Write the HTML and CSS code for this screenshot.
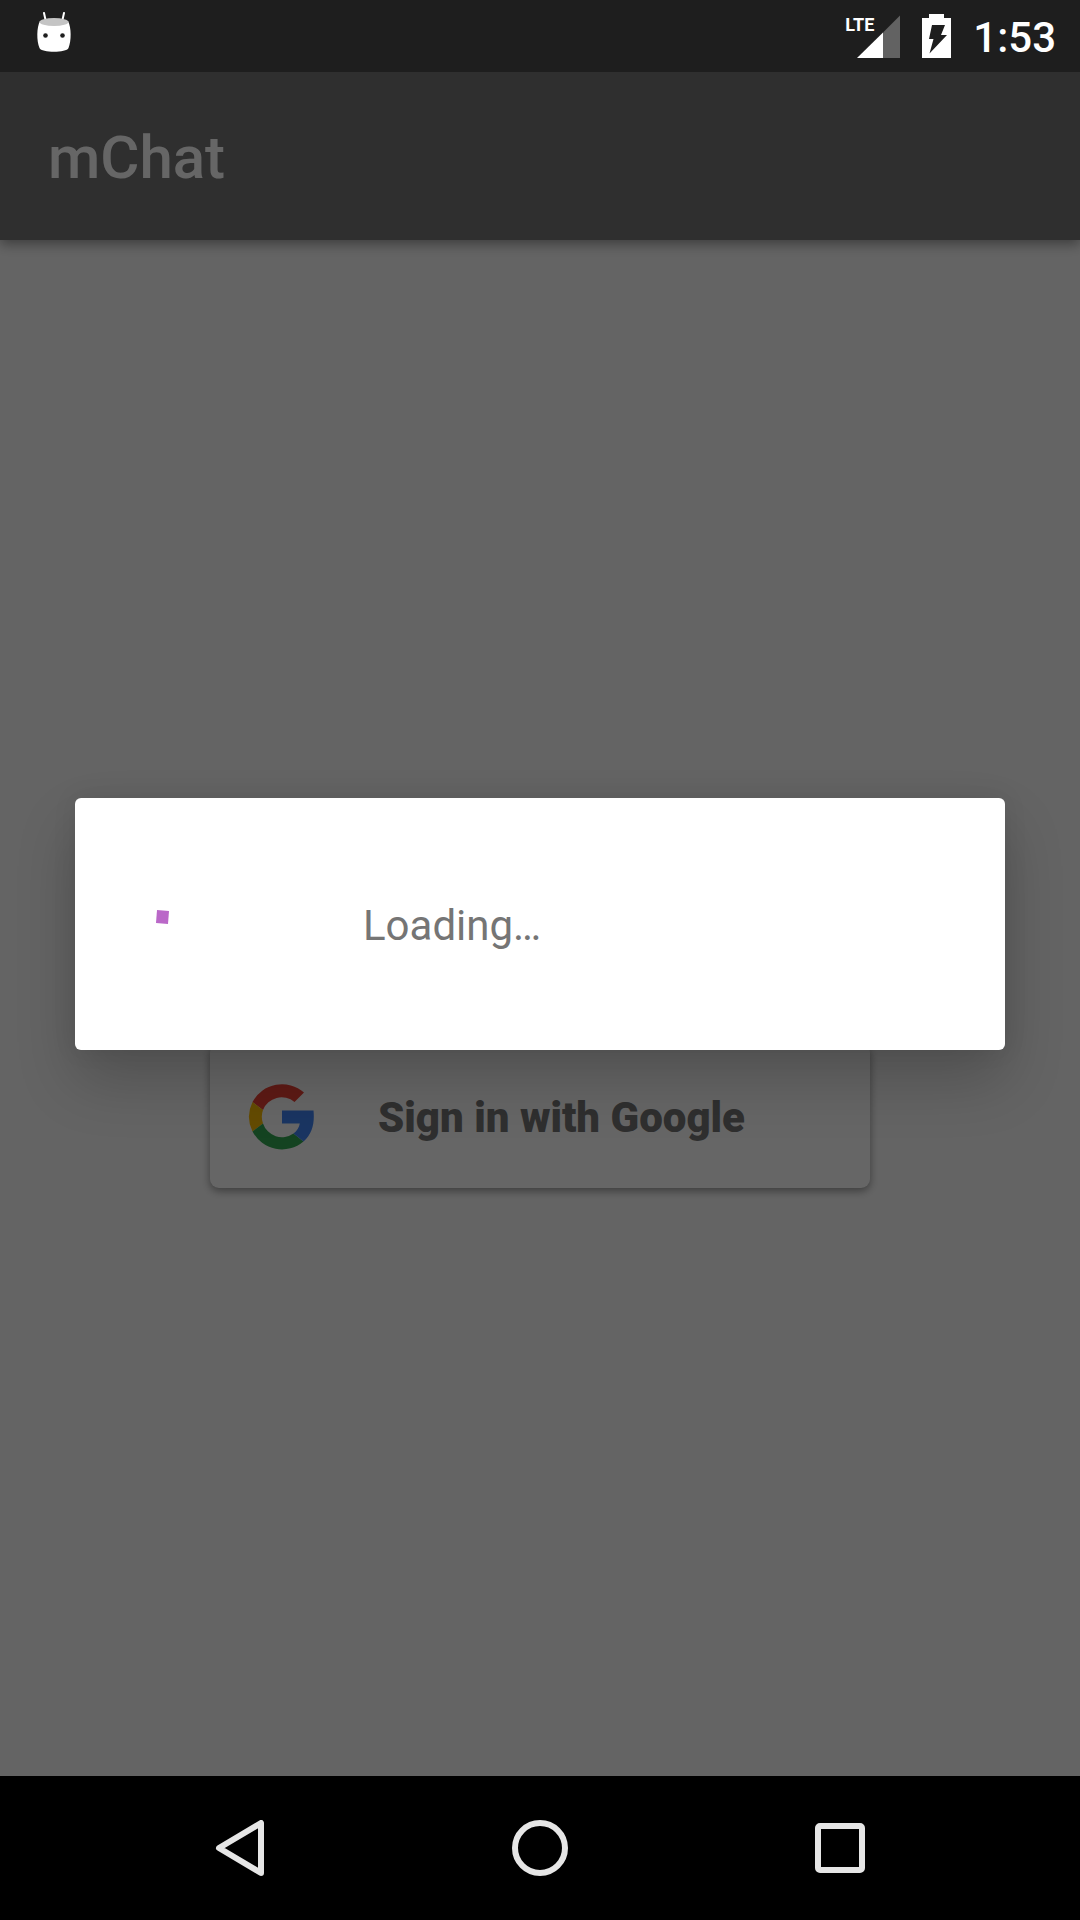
FILE: index.html
```html
<!DOCTYPE html>
<html lang="en">
<head>
<meta charset="utf-8">
<meta name="viewport" content="width=device-width, initial-scale=1">
<title>mChat</title>
<link rel="stylesheet" href="styles.css">
</head>
<body>
<div class="screen">
  <div class="status-bar">
    <svg class="status-icon" width="36" height="42" viewBox="0 0 36 42" role="img" aria-label="Notification">
      <path d="M8 1l2 9M28 1l-2 9" stroke="#fff" stroke-width="2" stroke-linecap="round"/>
      <path d="M4 9C.5 15.500 .5 29 3.500 36c2 5 27 5 29 0C35.500 29 35.500 15.500 32 9z" fill="#fff"/>
      <ellipse cx="18" cy="10" rx="14.500" ry="4" fill="#c4c4c4"/>
      <circle cx="9.500" cy="23.500" r="2.300" fill="#1e1e1e"/>
      <circle cx="26.500" cy="23.500" r="2.300" fill="#1e1e1e"/>
    </svg>
    <div class="status-info">
      <div class="signal">
        <svg width="43" height="43" viewBox="0 0 43 43" aria-hidden="true">
          <path d="M0 43L26 17.500V43z" fill="#fff"/>
          <path d="M26 17.500L43 .5V43H26z" fill="#626262"/>
        </svg>
        <span class="network">LTE</span>
      </div>
      <svg width="29" height="44" viewBox="0 0 29 44" role="img" aria-label="Battery charging">
        <path d="M0 4h7V0h15v4h7v40H0z" fill="#fff"/>
        <path d="M10 11h13l-4 10h6L7.500 39.500l4-14.500H7z" fill="#1e1e1e"/>
      </svg>
      <time class="clock">1:53</time>
    </div>
  </div>

  <header class="app-bar"><h1 class="app-title">mChat</h1></header>

  <main class="content">
    <button class="sign-in" type="button">
      <svg width="66" height="67" viewBox="0 0 66 67" aria-hidden="true">
        <path fill="#ea4335" d="M4.500 19A33.300 33.300 0 0 1 56 9.500L46.500 19A20 20 0 0 0 15 27z"/>
        <path fill="#fbbc05" d="M4.500 19A33.300 33.300 0 0 0 4.500 48.500L15 40.500A20 20 0 0 1 15 27z"/>
        <path fill="#34a853" d="M4.500 48.500A33.300 33.300 0 0 0 55.500 58.500L45.500 50.500A20 20 0 0 1 15 40.500z"/>
        <path fill="#4285f4" d="M34 27.500H65.500C66.700 40 64.500 50.500 55.500 58.500L45.500 50.500C49 48 51 44.500 51.800 40.500H34z"/>
      </svg>
      <span class="sign-in-label">Sign in with Google</span>
    </button>
  </main>

  <div class="scrim"></div>
  <div class="dialog-layer">
    <div class="dialog" role="dialog" aria-label="Loading">
      <svg class="spinner" width="144" height="144" viewBox="0 0 144 144" aria-hidden="true">
        <path d="M25 58L37 59L36 72L24 71z" fill="#ba68c8"/>
      </svg>
      <p class="dialog-text">Loading…</p>
    </div>
  </div>

  <nav class="nav-bar">
    <button class="nav-button" type="button" aria-label="Back">
      <svg width="56" height="56" viewBox="0 0 56 56"><path d="M49 3V53L7 28z"/></svg>
    </button>
    <button class="nav-button" type="button" aria-label="Home">
      <svg width="56" height="56" viewBox="0 0 56 56"><circle cx="28" cy="28" r="25"/></svg>
    </button>
    <button class="nav-button" type="button" aria-label="Recent apps">
      <svg width="56" height="56" viewBox="0 0 56 56"><rect x="6" y="6" width="44" height="44" rx="2"/></svg>
    </button>
  </nav>
</div>
</body>
</html>
```
FILE: styles.css
```css
* {
  box-sizing: border-box;
}

body {
  margin: 0;
  font-family: Roboto, sans-serif;
}

button {
  border: 0;
  font: inherit;
  cursor: pointer;
}

svg {
  display: block;
  flex: none;
}

.screen {
  display: grid;
  grid-template-columns: 1fr;
  grid-template-rows: 72px 168px 1fr 144px;
  min-height: 100vh;
}

.status-bar {
  grid-area: 1 / 1;
  z-index: 3;
  display: flex;
  align-items: center;
  justify-content: space-between;
  padding: 0 24px 0 36px;
  background: #1e1e1e;
  color: #fff;
}

.status-icon {
  margin-bottom: 6px;
}

.status-info {
  display: flex;
  align-items: center;
  gap: 22px;
}

.signal {
  position: relative;
}

.network {
  position: absolute;
  top: 0;
  left: -12px;
  font-size: 18px;
  font-weight: 700;
  line-height: 20px;
}

.clock,
.app-title,
.sign-in-label,
.dialog-text {
  margin: 0;
  padding-top: 4px;
}

.clock {
  font-size: 42px;
  font-weight: 500;
  line-height: 48px;
}

.app-bar {
  grid-area: 2 / 1;
  z-index: 1;
  display: flex;
  align-items: center;
  padding: 0 48px;
  background: #757575;
  box-shadow: 0 4px 12px rgba(0, 0, 0, 0.4);
}

.app-title {
  color: #fff;
  font-size: 60px;
  font-weight: 500;
  line-height: 72px;
}

.content {
  grid-area: 3 / 1;
  display: flex;
  align-items: center;
  justify-content: center;
  padding-top: 216px;
  background: #fafafa;
}

.sign-in {
  display: flex;
  align-items: center;
  gap: 64px;
  width: 660px;
  max-width: 90%;
  height: 144px;
  padding: 0 38px;
  border-radius: 9px;
  background: #fff;
  color: #757575;
  box-shadow: 0 3px 9px rgba(0, 0, 0, 0.4);
}

.sign-in-label {
  font-size: 42px;
  font-weight: 900;
  line-height: 48px;
}

.scrim {
  grid-area: 2 / 1 / 4 / 2;
  z-index: 2;
  background: rgba(0, 0, 0, 0.6);
}

.dialog-layer {
  grid-area: 2 / 1 / 4 / 2;
  z-index: 4;
  display: flex;
  align-items: center;
  padding: 0 75px;
}

.dialog {
  display: flex;
  flex: 1;
  align-items: center;
  gap: 87px;
  padding: 54px 57px;
  border-radius: 6px;
  background: #fff;
  box-shadow: 0 30px 60px rgba(0, 0, 0, 0.2), 0 0 24px rgba(0, 0, 0, 0.08);
}

.dialog-text {
  color: #757575;
  font-size: 42px;
  line-height: 48px;
}

.nav-bar {
  grid-area: 4 / 1;
  display: flex;
  align-items: center;
  justify-content: center;
  gap: 60px;
  background: #000;
}

.nav-button {
  display: flex;
  align-items: center;
  justify-content: center;
  width: 240px;
  height: 144px;
  background: none;
}

.nav-button svg {
  fill: none;
  stroke: #e6e6e6;
  stroke-width: 6;
  stroke-linejoin: round;
}
```
